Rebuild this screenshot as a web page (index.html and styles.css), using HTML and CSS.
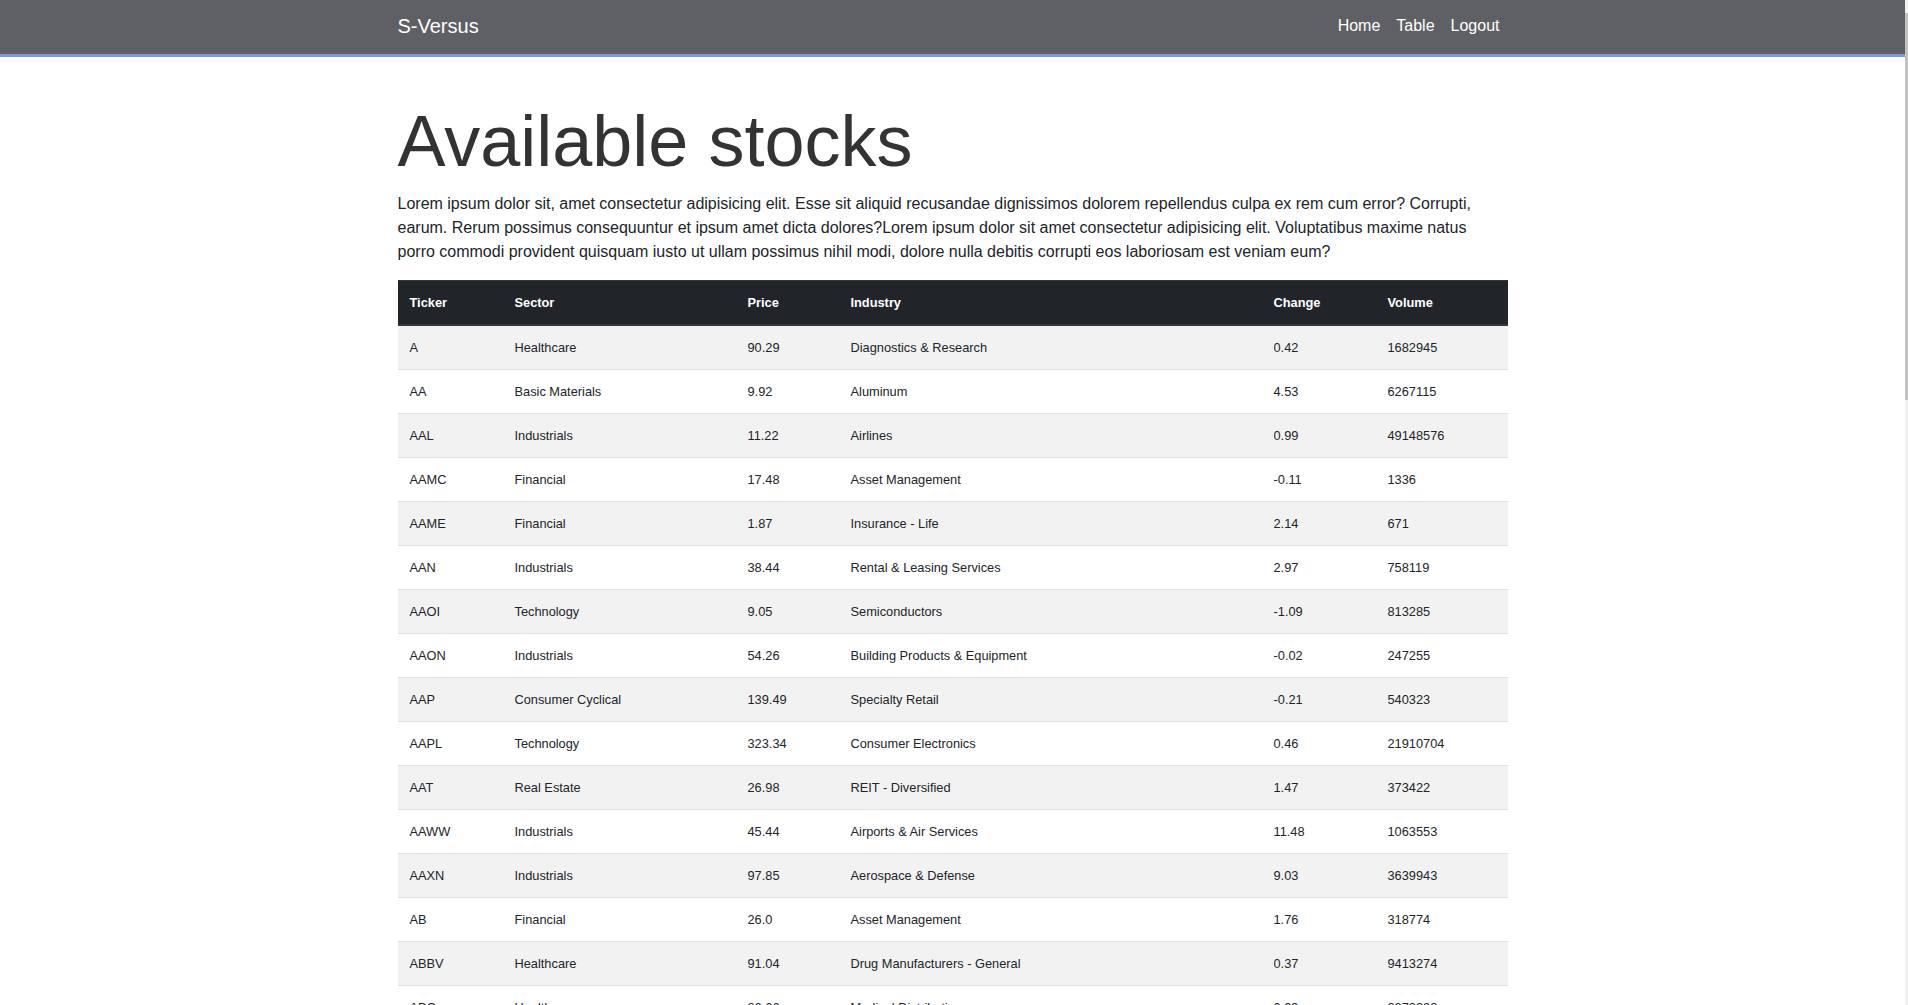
FILE: index.html
```html
<!DOCTYPE html>
<html lang="en">
<head>
<meta charset="utf-8">
<title>S-Versus</title>
<link rel="stylesheet" href="styles.css">
</head>
<body>
<nav class="navbar">
  <div class="nav-inner">
    <a class="brand" href="#">S-Versus</a>
    <ul class="nav-links">
      <li><a href="#">Home</a></li>
      <li><a href="#">Table</a></li>
      <li><a href="#">Logout</a></li>
    </ul>
  </div>
</nav>
<main class="container">
  <h1 class="title">Available stocks</h1>
  <p class="lead-text">Lorem ipsum dolor sit, amet consectetur adipisicing elit. Esse sit aliquid recusandae dignissimos dolorem repellendus culpa ex rem cum error? Corrupti, earum. Rerum possimus consequuntur et ipsum amet dicta dolores?Lorem ipsum dolor sit amet consectetur adipisicing elit. Voluptatibus maxime natus porro commodi provident quisquam iusto ut ullam possimus nihil modi, dolore nulla debitis corrupti eos laboriosam est veniam eum?</p>
  <table class="stocks">
    <colgroup>
      <col class="c-ticker"><col class="c-sector"><col class="c-price"><col class="c-industry"><col class="c-change"><col class="c-volume">
    </colgroup>
    <thead>
      <tr><th>Ticker</th><th>Sector</th><th>Price</th><th>Industry</th><th>Change</th><th>Volume</th></tr>
    </thead>
    <tbody>
      <tr><td>A</td><td>Healthcare</td><td>90.29</td><td>Diagnostics &amp; Research</td><td>0.42</td><td>1682945</td></tr>
      <tr><td>AA</td><td>Basic Materials</td><td>9.92</td><td>Aluminum</td><td>4.53</td><td>6267115</td></tr>
      <tr><td>AAL</td><td>Industrials</td><td>11.22</td><td>Airlines</td><td>0.99</td><td>49148576</td></tr>
      <tr><td>AAMC</td><td>Financial</td><td>17.48</td><td>Asset Management</td><td>-0.11</td><td>1336</td></tr>
      <tr><td>AAME</td><td>Financial</td><td>1.87</td><td>Insurance - Life</td><td>2.14</td><td>671</td></tr>
      <tr><td>AAN</td><td>Industrials</td><td>38.44</td><td>Rental &amp; Leasing Services</td><td>2.97</td><td>758119</td></tr>
      <tr><td>AAOI</td><td>Technology</td><td>9.05</td><td>Semiconductors</td><td>-1.09</td><td>813285</td></tr>
      <tr><td>AAON</td><td>Industrials</td><td>54.26</td><td>Building Products &amp; Equipment</td><td>-0.02</td><td>247255</td></tr>
      <tr><td>AAP</td><td>Consumer Cyclical</td><td>139.49</td><td>Specialty Retail</td><td>-0.21</td><td>540323</td></tr>
      <tr><td>AAPL</td><td>Technology</td><td>323.34</td><td>Consumer Electronics</td><td>0.46</td><td>21910704</td></tr>
      <tr><td>AAT</td><td>Real Estate</td><td>26.98</td><td>REIT - Diversified</td><td>1.47</td><td>373422</td></tr>
      <tr><td>AAWW</td><td>Industrials</td><td>45.44</td><td>Airports &amp; Air Services</td><td>11.48</td><td>1063553</td></tr>
      <tr><td>AAXN</td><td>Industrials</td><td>97.85</td><td>Aerospace &amp; Defense</td><td>9.03</td><td>3639943</td></tr>
      <tr><td>AB</td><td>Financial</td><td>26.0</td><td>Asset Management</td><td>1.76</td><td>318774</td></tr>
      <tr><td>ABBV</td><td>Healthcare</td><td>91.04</td><td>Drug Manufacturers - General</td><td>0.37</td><td>9413274</td></tr>
      <tr><td>ABC</td><td>Healthcare</td><td>86.66</td><td>Medical Distribution</td><td>0.09</td><td>2373232</td></tr>
      <tr><td>ABCB</td><td>Financial</td><td>43.42</td><td>Banks - Regional</td><td>0.58</td><td>218413</td></tr>
      <tr><td>ABEO</td><td>Healthcare</td><td>2.04</td><td>Biotechnology</td><td>1.49</td><td>1204731</td></tr>
    </tbody>
  </table>
</main>
<div class="scrollbar" aria-hidden="true"><div class="scrollbar-thumb"></div></div>
</body>
</html>
```
FILE: styles.css
```css
html, body {
  margin: 0;
  padding: 0;
}
body {
  font-family: "Liberation Sans", Arial, sans-serif;
  font-size: 16px;
  line-height: 1.5;
  color: #212529;
  background: #fff;
  padding-right: 3px;
}
.navbar {
  background: #5f6065;
  border-bottom: 3px solid #7b98e2;
}
.nav-inner {
  box-sizing: border-box;
  max-width: 1110px;
  margin: 0 auto;
  height: 54px;
  padding-bottom: 2px;
  display: flex;
  align-items: center;
  justify-content: space-between;
}
.brand {
  color: #fff;
  font-size: 20px;
  line-height: 30px;
  text-decoration: none;
}
.nav-links {
  list-style: none;
  margin: 0;
  padding: 0;
  display: flex;
}
.nav-links a {
  display: block;
  padding: 8px;
  color: #fff;
  text-decoration: none;
  font-size: 16px;
  line-height: 24px;
}
.container {
  max-width: 1110px;
  margin: 0 auto;
  padding-top: 41px;
}
.title {
  font-size: 72px;
  font-weight: 300;
  line-height: 1.2;
  margin: 0 0 8px;
  color: #333;
}
.lead-text {
  margin: 0 0 16px;
}
.stocks {
  width: 100%;
  border-collapse: collapse;
  font-size: 12.8px;
  line-height: 19px;
  margin-bottom: 16px;
}
.c-ticker { width: 105px; }
.c-sector { width: 233px; }
.c-price { width: 103px; }
.c-industry { width: 423px; }
.c-change { width: 114px; }
.c-volume { width: 132px; }
.stocks th,
.stocks td {
  padding: 12px;
  text-align: left;
  vertical-align: top;
}
.stocks th {
  background: #212529;
  color: #fff;
  font-weight: bold;
  border-top: 1px solid #32383e;
  border-bottom: 2px solid #32383e;
}
.stocks td {
  border-top: 1px solid #dee2e6;
}
.stocks tbody tr:first-child td {
  border-top: 0;
}
.stocks tbody tr:nth-child(odd) {
  background: #f2f2f2;
}
.scrollbar {
  position: fixed;
  top: 0;
  right: 0;
  bottom: 0;
  width: 3px;
  background: #f1f1f1;
}
.scrollbar-thumb {
  margin-top: 13px;
  height: 387px;
  background: #c1c1c1;
}
```
